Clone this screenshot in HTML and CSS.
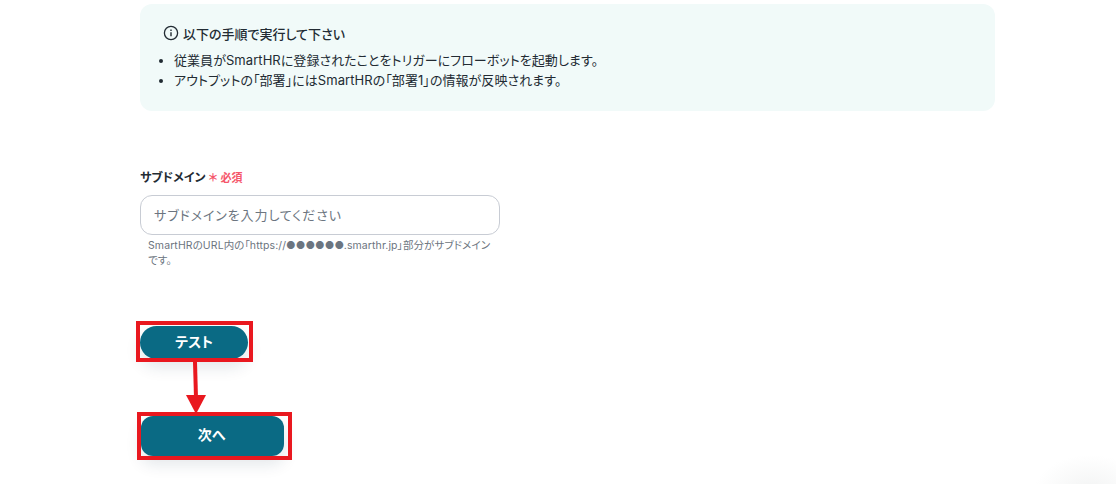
FILE: index.html
```html
<!DOCTYPE html>
<html lang="ja">

<head>
  <meta charset="utf-8">
  <title>サブドメイン</title>
  <link rel="stylesheet" href="styles.css">
</head>

<body>
  <div class="page">
    <div class="notice">
      <div class="notice-title">
        <svg class="info-icon" width="16" height="16" viewBox="0 0 16 16" fill="none" stroke="#222b33">
          <circle cx="8" cy="8" r="6.6" stroke-width="1.3" />
          <path d="M8 7.2v4" stroke-width="1.4" />
          <path d="M8 4.6v1.3" stroke-width="1.4" />
        </svg>
        以下の手順で実行して下さい
      </div>
      <ul class="notice-list">
        <li>従業員がSmartHRに登録されたことをトリガーにフローボットを起動します。</li>
        <li>アウトプットの「部署」にはSmartHRの「部署1」の情報が反映されます。</li>
      </ul>
    </div>

    <form class="form">
      <label class="label">サブドメイン<span class="asterisk">＊</span><span class="required">必須</span></label>
      <input class="input" type="text" placeholder="サブドメインを入力してください">
      <p class="help">SmartHRのURL内の「https://●●●●●●.smarthr.jp」部分がサブドメインです。</p>
    </form>

    <div class="actions">
      <button class="button button-test" type="button">テスト</button>
      <button class="button button-next" type="button">次へ</button>
      <div class="frame frame-test"></div>
      <div class="frame frame-next"></div>
      <svg class="arrow" width="30" height="54" viewBox="0 0 30 54">
        <path d="M14 0l1 36" stroke="#e9181f" stroke-width="4" fill="none" />
        <path d="M5 33h20l-10 19z" fill="#e9181f" />
      </svg>
    </div>
  </div>
</body>

</html>
```

FILE: styles.css
```css
html,
body {
  height: 100%;
  margin: 0;
  overflow: hidden;
}

body {
  color: #222b33;
  font-family: Inter, "Noto Sans CJK JP", sans-serif;
  font-size: 13px;
  font-feature-settings: "palt";
  background: radial-gradient(ellipse 55px 35px at 1090px 490px, #f3f4f4, #fff);
}

.page {
  width: 855px;
  padding: 4px 0 0 140px;
}

.notice {
  box-sizing: border-box;
  height: 107px;
  padding: 19px 24px 0 20px;
  background-color: #f1faf9;
  border-radius: 12px;
}

.notice-title {
  display: flex;
  align-items: center;
  gap: 4px;
  height: 20px;
  padding-left: 3px;
  font-size: 13px;
  font-weight: 500;
}

.notice-list {
  margin: 7px 0 0;
  padding-left: 14px;
  line-height: 20px;
  letter-spacing: 0.06px;
}

.form {
  display: flex;
  flex-direction: column;
  align-items: flex-start;
  width: 360px;
  padding-top: 57px;
}

.label {
  height: 20px;
  margin-bottom: 7px;
  font-size: 12px;
  font-weight: 700;
  line-height: 20px;
}

.asterisk {
  margin-left: 3px;
  color: #f5566b;
  font-size: 11px;
  font-weight: 700;
}

.required {
  margin-left: 3px;
  color: #f5566b;
  font-size: 11px;
  font-weight: 700;
}

.input {
  box-sizing: border-box;
  width: 360px;
  height: 40px;
  padding: 0 13px;
  font-family: inherit;
  font-size: 13px;
  font-feature-settings: "palt";
  letter-spacing: 0.9px;
  background-color: #fff;
  border: 1px solid #c8ccd4;
  border-radius: 12px;
  outline: none;
}

.input::placeholder {
  color: #6c7580;
  opacity: 1;
}

.help {
  margin: 3px 0 0;
  padding: 0 2px 0 8px;
  color: #6c7580;
  font-size: 10.5px;
  line-height: 15px;
  letter-spacing: 0.1px;
}

.actions {
  position: relative;
  display: flex;
  flex-direction: column;
  align-items: flex-start;
  gap: 57px;
  padding-top: 58px;
}

.button {
  padding: 0 0 4px;
  color: #fff;
  font-family: inherit;
  font-size: 14px;
  font-weight: 700;
  font-feature-settings: "palt";
  background-color: #0a6a84;
  border: none;
  box-shadow: 0 8px 16px rgba(20, 50, 70, 0.12);
}

.button-test {
  width: 108px;
  height: 33px;
  border-radius: 17px;
}

.button-next {
  width: 143px;
  height: 40px;
  margin-left: 1px;
  padding-right: 2px;
  border-radius: 12px;
}

.frame {
  position: absolute;
  box-sizing: border-box;
  border: 4px solid #e9181f;
}

.frame-test {
  top: 53px;
  left: -4px;
  width: 117px;
  height: 41px;
}

.frame-next {
  top: 144px;
  left: -3px;
  width: 155px;
  height: 48px;
}

.arrow {
  position: absolute;
  top: 94px;
  left: 41px;
}
```
